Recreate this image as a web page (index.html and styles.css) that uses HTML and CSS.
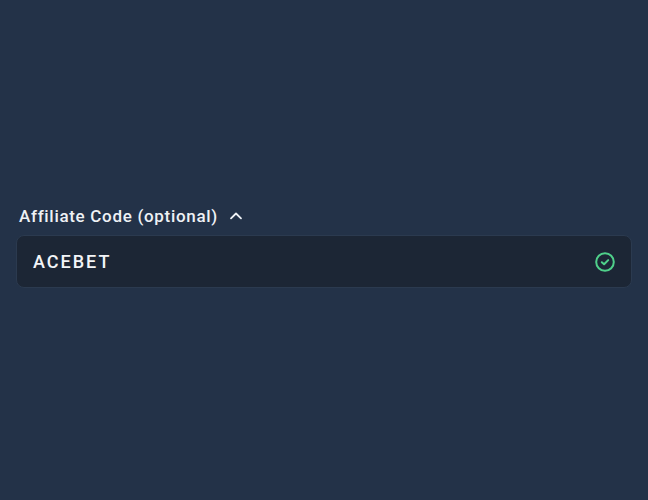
FILE: index.html
```html
<!DOCTYPE html>
<html lang="en">
<head>
<meta charset="utf-8">
<title>Affiliate Code</title>
<link rel="stylesheet" href="styles.css">
</head>
<body>
<main class="page">
  <div class="field">
    <button class="label" type="button">
      <span>Affiliate Code (optional)</span>
      <svg class="chevron" width="14" height="14" viewBox="0 0 14 14" fill="none"><path d="M2 9.4 7 4.5l5 4.9" stroke="#eef1f5" stroke-width="1.8" stroke-linecap="round" stroke-linejoin="round"/></svg>
    </button>
    <div class="input">
      <span class="value">ACEBET</span>
      <svg class="check" width="20" height="20" viewBox="0 0 20 20" fill="none"><circle cx="10" cy="10" r="8.8" stroke="#4fd08a" stroke-width="2"/><path d="M6.8 10.2l2.3 2.1 4.1-4.2" stroke="#4fd08a" stroke-width="2" stroke-linecap="round" stroke-linejoin="round"/></svg>
    </div>
  </div>
</main>
</body>
</html>
```
FILE: styles.css
```css
html, body { margin: 0; height: 100%; }
body { background: #233248; font-family: Roboto, "Noto Sans", sans-serif; }
.page { height: 500px; padding: 205px 16px 0; box-sizing: border-box; }
.field { display: flex; flex-direction: column; gap: 8px; }
.label { display: flex; align-items: center; gap: 11px; background: none; border: 0; padding: 0 0 0 3px; color: #eef1f5; font: 500 17px/22px Roboto, sans-serif; letter-spacing: 0.69px; height: 22px; }
.input { display: flex; align-items: center; justify-content: space-between; height: 53px; box-sizing: border-box; padding: 0 16px; background: #1c2635; border: 1px solid #2b3a4f; border-radius: 8px; }
.value { color: #f3f5f8; font: 500 18px/24px Roboto, sans-serif; letter-spacing: 2px; }
.check { display: block; }
```
